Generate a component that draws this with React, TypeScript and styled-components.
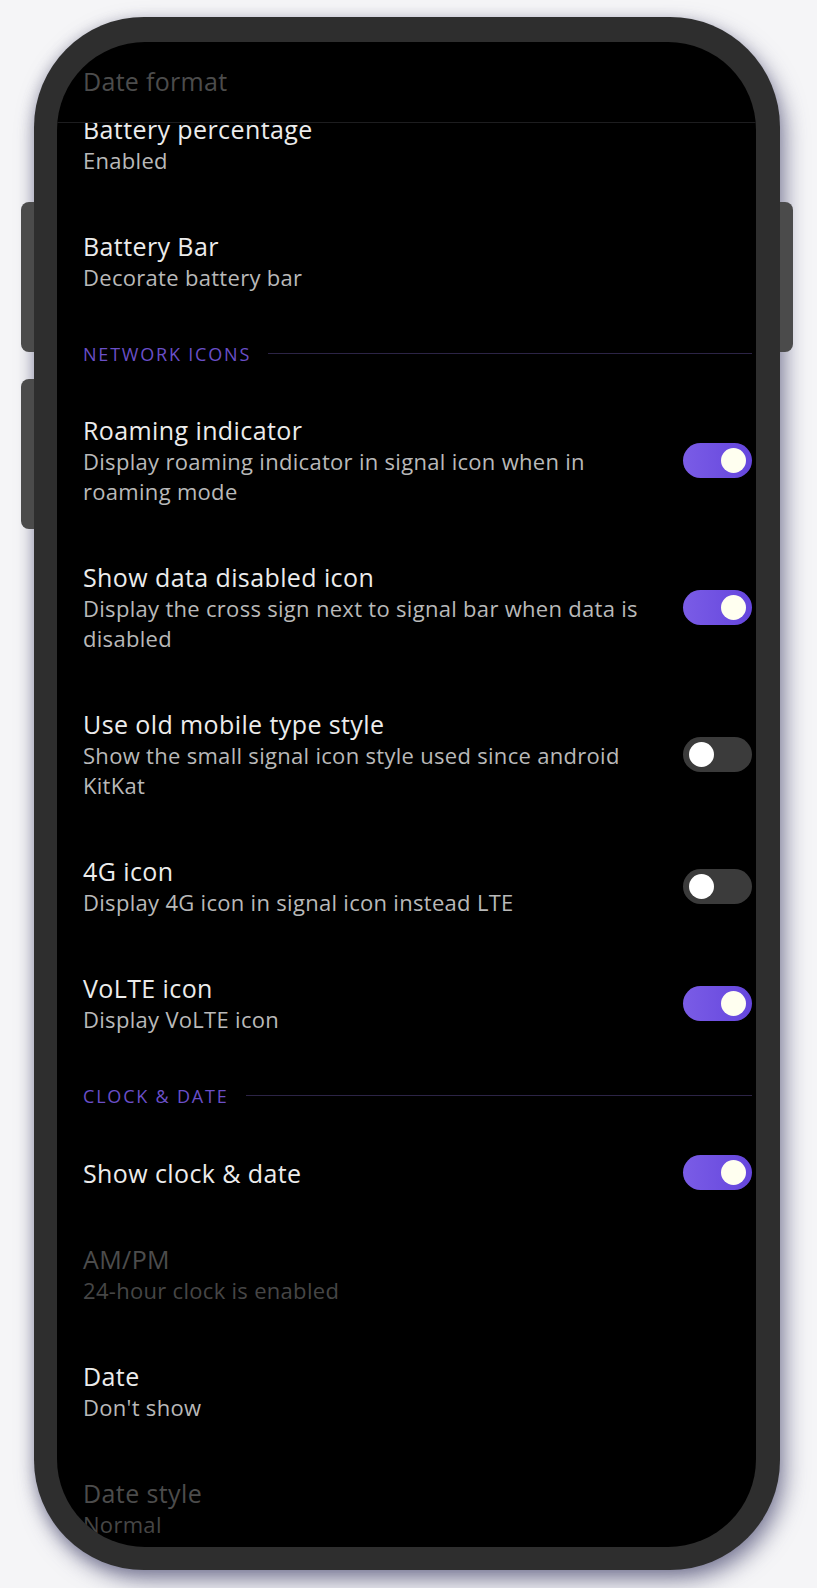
import React from "react";
import styled, { createGlobalStyle } from "styled-components";

const Global = createGlobalStyle`
  html, body { margin: 0; padding: 0; background: #f5f5f7; }
  body { font-family: "Open Sans", "Noto Sans", sans-serif; }
`;

const Stage = styled.div`
  width: 817px;
  height: 1588px;
  padding: 17px 0 0 34px;
  box-sizing: border-box;
  overflow: hidden;
`;

const Phone = styled.div`
  position: relative;
  width: 746px;
  height: 1553px;
  box-sizing: border-box;
  padding: 25px 24px 23px 23px;
  background: #2e2e2e;
  border-radius: 110px;
  box-shadow: 5px 10px 22px rgba(70, 70, 110, 0.65), -3px 2px 12px rgba(90, 90, 120, 0.25);
`;

const SideKey = styled.div<{ $side: "left" | "right"; $top: number }>`
  position: absolute;
  top: ${(p) => p.$top}px;
  ${(p) => (p.$side === "left" ? "left: -13px;" : "right: -13px;")}
  width: 13px;
  height: 150px;
  background: #4b4b4b;
  border-radius: ${(p) => (p.$side === "left" ? "8px 0 0 8px" : "0 8px 8px 0")};
`;

const Screen = styled.div`
  height: 100%;
  background: #000;
  border-radius: 88px;
  overflow: hidden;
  display: flex;
  flex-direction: column;
`;

const TopBar = styled.div`
  flex: 0 0 81px;
  display: flex;
  align-items: center;
  padding: 0 0 3px 26px;
  box-sizing: border-box;
  border-bottom: 1px solid #1d1d1f;
  color: #4c4c4c;
  font-size: 25px;
  letter-spacing: 0.3px;
`;

const Scroller = styled.div`
  flex: 1;
  overflow: hidden;
`;

const List = styled.div`
  margin-top: -37px;
  display: flex;
  flex-direction: column;
`;

const Row = styled.div<{ $single?: boolean }>`
  display: flex;
  align-items: center;
  gap: 26px;
  padding: ${(p) => (p.$single ? "26px 4px 26px 26px" : "27px 4px 28px 26px")};
`;

const TextCol = styled.div`
  flex: 1;
  min-width: 0;
  display: flex;
  flex-direction: column;
`;

const Title = styled.div<{ $dim?: boolean }>`
  font-size: 25px;
  line-height: 32px;
  letter-spacing: 0.4px;
  color: ${(p) => (p.$dim ? "#4c4c4c" : "#ececec")};
`;

const Summary = styled.div<{ $dim?: boolean }>`
  font-size: 22px;
  line-height: 30px;
  letter-spacing: 0.3px;
  color: ${(p) => (p.$dim ? "#464646" : "#b9b9b9")};
`;

const SectionHead = styled.div`
  height: 67px;
  display: flex;
  align-items: center;
  gap: 17px;
  padding: 0 4px 0 26px;
`;

const SectionLabel = styled.span`
  color: #6a4fc8;
  font-size: 18px;
  letter-spacing: 1.8px;
  text-transform: uppercase;
`;

const SectionRule = styled.div`
  flex: 1;
  height: 1px;
  background: #2c2446;
`;

const Track = styled.div<{ $on: boolean }>`
  flex: 0 0 69px;
  height: 35px;
  border-radius: 18px;
  box-sizing: border-box;
  padding: 0 6px;
  display: flex;
  align-items: center;
  justify-content: ${(p) => (p.$on ? "flex-end" : "flex-start")};
  background: ${(p) =>
    p.$on ? "linear-gradient(90deg, #7a5ce6 0%, #6546dd 100%)" : "#3b3b3b"};
`;

const Knob = styled.div<{ $on: boolean }>`
  width: 25px;
  height: 25px;
  border-radius: 50%;
  background: ${(p) => (p.$on ? "#fffff0" : "#ffffff")};
`;

type Item =
  | { kind: "section"; label: string }
  | { kind: "pref"; title: string; summary?: string; toggle?: boolean; dim?: boolean };

const items: Item[] = [
  { kind: "pref", title: "Battery percentage", summary: "Enabled" },
  { kind: "pref", title: "Battery Bar", summary: "Decorate battery bar" },
  { kind: "section", label: "Network icons" },
  {
    kind: "pref",
    title: "Roaming indicator",
    summary: "Display roaming indicator in signal icon when in roaming mode",
    toggle: true,
  },
  {
    kind: "pref",
    title: "Show data disabled icon",
    summary: "Display the cross sign next to signal bar when data is disabled",
    toggle: true,
  },
  {
    kind: "pref",
    title: "Use old mobile type style",
    summary: "Show the small signal icon style used since android KitKat",
    toggle: false,
  },
  { kind: "pref", title: "4G icon", summary: "Display 4G icon in signal icon instead LTE", toggle: false },
  { kind: "pref", title: "VoLTE icon", summary: "Display VoLTE icon", toggle: true },
  { kind: "section", label: "Clock & date" },
  { kind: "pref", title: "Show clock & date", toggle: true },
  { kind: "pref", title: "AM/PM", summary: "24-hour clock is enabled", dim: true },
  { kind: "pref", title: "Date", summary: "Don't show" },
  { kind: "pref", title: "Date style", summary: "Normal", dim: true },
];

function Switch({ on }: { on: boolean }) {
  return (
    <Track $on={on}>
      <Knob $on={on} />
    </Track>
  );
}

export default function App() {
  return (
    <>
      <Global />
      <Stage>
        <Phone>
          <SideKey $side="left" $top={185} />
          <SideKey $side="left" $top={362} />
          <SideKey $side="right" $top={185} />
          <Screen>
            <TopBar>Date format</TopBar>
            <Scroller>
              <List>
                {items.map((it, i) =>
                  it.kind === "section" ? (
                    <SectionHead key={i}>
                      <SectionLabel>{it.label}</SectionLabel>
                      <SectionRule />
                    </SectionHead>
                  ) : (
                    <Row key={i} $single={!it.summary}>
                      <TextCol>
                        <Title $dim={it.dim}>{it.title}</Title>
                        {it.summary && <Summary $dim={it.dim}>{it.summary}</Summary>}
                      </TextCol>
                      {it.toggle !== undefined && <Switch on={it.toggle} />}
                    </Row>
                  )
                )}
              </List>
            </Scroller>
          </Screen>
        </Phone>
      </Stage>
    </>
  );
}
